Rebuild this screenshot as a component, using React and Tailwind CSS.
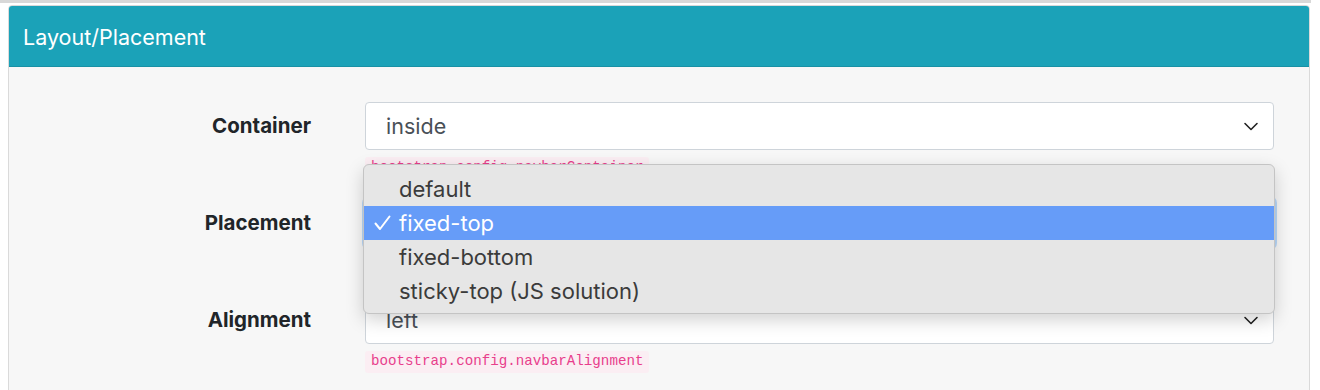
import React from 'react';

const Chevron = () => (
  <svg width="16" height="16" viewBox="0 0 16 16" className="shrink-0">
    <path d="M2 5.5l6 6 6-6" fill="none" stroke="#222" strokeWidth="1.6" strokeLinecap="round" strokeLinejoin="round" />
  </svg>
);

const rows = [
  { label: 'Container', value: 'inside', code: 'bootstrap.config.navbarContainer' },
  { label: 'Placement', value: 'fixed-top', code: 'bootstrap.config.navbarPosition', focused: true },
  { label: 'Alignment', value: 'left', code: 'bootstrap.config.navbarAlignment' },
];

const options = ['default', 'fixed-top', 'fixed-bottom', 'sticky-top (JS solution)'];

const App = () => {
  return (
    <div className="w-[1320px] h-[390px] overflow-hidden bg-white font-['Inter',sans-serif]">
      {/* bottom edge of the previous card */}
      <div className="h-[3px] w-[1311px] bg-[#d8d8d8]"></div>

      <div className="mt-[2px] ml-[8px] w-[1302px] rounded-t-[4px] border border-[#dadada] bg-[#f7f7f7]">
        {/* Header */}
        <div className="h-[61px] flex items-center pl-[14px] pt-[3px] bg-[#1ba2b8] border-b border-black/10 rounded-t-[3px] text-white text-[21.5px]">
          Layout/Placement
        </div>

        {/* Body */}
        <div className="relative pt-[35px] h-[340px]">
          {rows.map((row) => (
            <div key={row.label} className="flex items-start mb-[20px]">
              <div className="w-[302px] h-[48px] flex items-center justify-end text-[20.5px] font-bold text-[#212529]">
                {row.label}
              </div>
              <div className="ml-[54px] w-[909px] flex flex-col items-start">
                <div
                  className={
                    row.focused
                      ? 'w-full h-[48px] flex items-center justify-between pl-[20px] pr-[14px] bg-white rounded-[4px] border border-[#80bdff] shadow-[0_0_0_3px_rgba(0,123,255,0.25)] text-[21.5px] text-[#495057]'
                      : 'w-full h-[48px] flex items-center justify-between pl-[20px] pr-[14px] bg-white rounded-[4px] border border-[#ced4da] text-[21.5px] text-[#495057]'
                  }
                >
                  <span>{row.value}</span>
                  <Chevron />
                </div>
                <div className="mt-[7px] h-[22px] px-[6px] flex items-center rounded-[3px] bg-[#fbeef3] font-['Liberation_Mono',monospace] text-[14.2px] text-[#e83e8c]">
                  {row.code}
                </div>
              </div>
            </div>
          ))}

          {/* Open native select menu */}
          <div className="absolute left-[354px] top-[97px] w-[912px] h-[150px] py-[7px] rounded-[6px] border border-[#c4c4c4] bg-[#e6e6e6] shadow-[0_6px_18px_rgba(0,0,0,0.18)] text-[22px] text-[#3b3b3b]">
            {options.map((opt) => (
              <div
                key={opt}
                className={
                  opt === 'fixed-top'
                    ? 'h-[34px] flex items-center bg-[#669cf8] text-white'
                    : 'h-[34px] flex items-center'
                }
              >
                <span className="w-[35px] flex justify-end pr-[8px]">
                  {opt === 'fixed-top' && (
                    <svg width="17" height="16" viewBox="0 0 17 16">
                      <path d="M1.5 8.5l4.5 5.5L15.5 1.5" fill="none" stroke="#fff" strokeWidth="2" strokeLinecap="round" strokeLinejoin="round" />
                    </svg>
                  )}
                </span>
                <span>{opt}</span>
              </div>
            ))}
          </div>
        </div>
      </div>
    </div>
  );
};

export default App;
